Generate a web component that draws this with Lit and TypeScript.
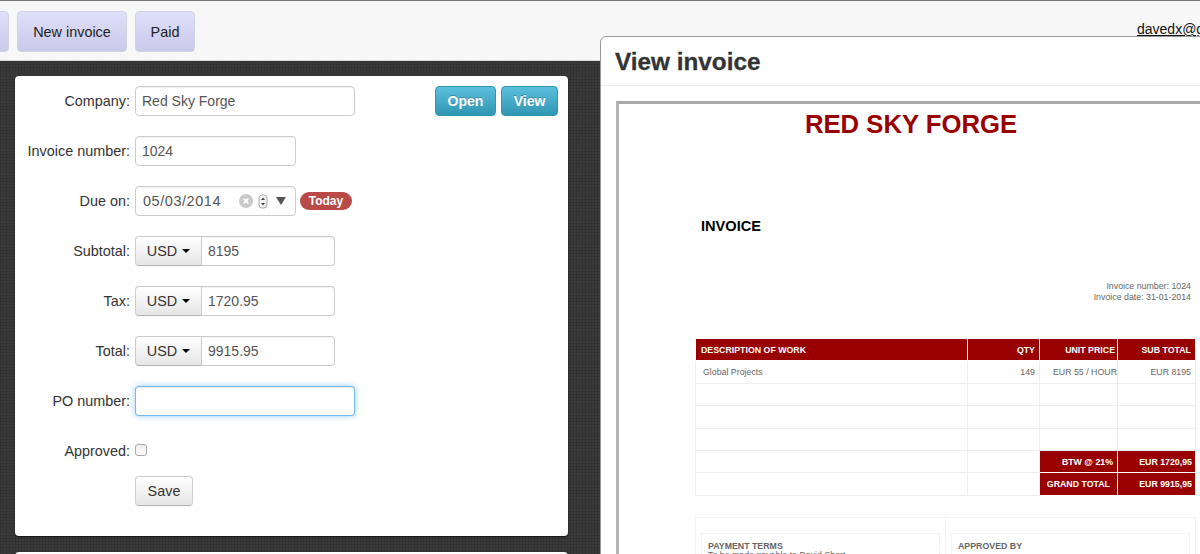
import { LitElement, html, css } from 'lit'
import { customElement } from 'lit/decorators.js'

// Invoice document shown inside the "View invoice" dialog
@customElement('invoice-doc')
export class InvoiceDoc extends LitElement {
  static styles = css`
    :host {
      display: block;
      width: 582px;
      margin-left: 1px;
      font-family: 'Liberation Sans', Arial, sans-serif;
      color: #666;
      font-size: 8.8px;
    }
    h1 {
      margin: 0;
      padding-top: 4px;
      text-align: center;
      color: #990000;
      font-size: 25.7px;
      line-height: 30px;
      font-weight: bold;
      height: 30px;
    }
    h2 {
      margin: 78px 0 0 81px;
      font-size: 14.6px;
      line-height: 18px;
      color: #000;
    }
    .meta {
      margin: 46px 11px 0 0;
      text-align: right;
      line-height: 10.500px;
    }
    table {
      margin: 36px 0 0 75px;
      width: 501px;
      border-collapse: collapse;
      table-layout: fixed;
    }
    td, th {
      border: 1px solid #eee;
      height: 22.4px;
      padding: 0 4px;
      text-align: right;
      box-sizing: border-box;
      white-space: nowrap;
      overflow: visible;
    }
    .wd { width: 272px; text-align: left; padding-left: 7px; }
    th {
      background: #990000;
      color: #fff;
      border-color: #fff;
      font-size: 8.8px;
    }
    th.wd { padding-left: 5px; }
    th.price { padding-right: 2px; }
    td.red {
      background: #990000;
      color: #fff;
      font-weight: bold;
      border-color: #fff;
    }
    td.tot { padding-right: 3px; }
    td.grand { padding-right: 7px; }
    td.flush { padding-right: 0; }
    .terms {
      margin: 21px 0 0 75px;
      width: 501px;
      border: 1px solid #f3f3f3;
      display: grid;
      grid-template-columns: 249px 1fr;
      height: 60px;
      box-sizing: border-box;
    }
    .cell { padding: 15px 5px 0; }
    .cell + .cell { border-left: 1px solid #f3f3f3; }
    .box {
      border: 1px solid #f3f3f3;
      padding: 8px 6px;
      height: 40px;
      line-height: 9px;
      color: #666;
    }
    .box b { display: block; }
  `

  render() {
    return html`
      <h1>RED SKY FORGE</h1>
      <h2>INVOICE</h2>
      <div class="meta">Invoice number: 1024<br />Invoice date: 31-01-2014</div>
      <table>
        <tr>
          <th class="wd">DESCRIPTION OF WORK</th>
          <th style="width:72px">QTY</th>
          <th class="price" style="width:78px">UNIT PRICE</th>
          <th>SUB TOTAL</th>
        </tr>
        <tr>
          <td class="wd">Global Projects</td>
          <td>149</td>
          <td class="flush">EUR 55 / HOUR</td>
          <td>EUR 8195</td>
        </tr>
        <tr><td class="wd"></td><td></td><td></td><td></td></tr>
        <tr><td class="wd"></td><td></td><td></td><td></td></tr>
        <tr><td class="wd"></td><td></td><td></td><td></td></tr>
        <tr>
          <td class="wd"></td><td></td>
          <td class="red">BTW @ 21%</td>
          <td class="red tot">EUR 1720,95</td>
        </tr>
        <tr>
          <td class="wd"></td><td></td>
          <td class="red grand">GRAND TOTAL</td>
          <td class="red tot">EUR 9915,95</td>
        </tr>
      </table>
      <div class="terms">
        <div class="cell">
          <div class="box"><b>PAYMENT TERMS</b>To be made payable to David Short</div>
        </div>
        <div class="cell">
          <div class="box"><b>APPROVED BY</b></div>
        </div>
      </div>
    `
  }
}

@customElement('app-root')
export class AppRoot extends LitElement {
  static styles = css`
    :host {
      display: block;
      position: relative;
      width: 1200px;
      height: 554px;
      overflow: hidden;
      font-family: 'Liberation Sans', Arial, sans-serif;
      font-size: 14.4px;
      color: #333;
      background-color: #3a3a3a;
      background-image:
        repeating-linear-gradient(0deg, rgba(0, 0, 0, 0.1) 0 1px, transparent 1px 3px),
        repeating-linear-gradient(90deg, rgba(0, 0, 0, 0.1) 0 1px, transparent 1px 3px);
    }

    .navbar {
      height: 61px;
      box-sizing: border-box;
      border-top: 1px solid #777;
      background: #f7f7f7;
      border-bottom: 1px solid #ddd;
      display: flex;
      align-items: flex-start;
      padding: 10px 0 0 0;
      gap: 8px;
      position: relative;
      white-space: nowrap;
    }
    .nav-btn {
      height: 41px;
      box-sizing: border-box;
      border: 1px solid #d2d2e6;
      border-radius: 4px;
      background: linear-gradient(#e0e0fb, #c9c9e8);
      display: flex;
      align-items: center;
      justify-content: center;
      color: #222;
    }
    .nav-btn.cut { width: 30px; margin-left: -21px; }
    .nav-btn.new { width: 110px; }
    .nav-btn.paid { width: 60px; }
    .user {
      position: absolute;
      left: 1137px;
      top: 20px;
      color: #111;
      font-size: 14px;
      text-decoration: underline;
      line-height: 16px;
    }

    .card {
      margin: 15px 0 0 15px;
      width: 553px;
      height: 460px;
      box-sizing: border-box;
      background: #fff;
      border-radius: 4px;
      box-shadow: 0 1px 2px rgba(0, 0, 0, 0.7);
      padding: 10px 10px 0 0;
      position: relative;
      display: flex;
      flex-direction: column;
    }
    .card.next { margin-top: 16px; }

    .row {
      display: grid;
      grid-template-columns: 115px 1fr;
      column-gap: 5px;
      height: 50px;
      align-items: start;
    }
    label {
      text-align: right;
      line-height: 30px;
      height: 30px;
      white-space: nowrap;
    }
    .field {
      height: 30px;
      box-sizing: border-box;
      border: 1px solid #ccc;
      border-radius: 4px;
      background: #fff;
      color: #555;
      font: inherit;
      font-size: 14px;
      padding: 0 6px;
      outline: none;
      box-shadow: inset 0 1px 1px rgba(0, 0, 0, 0.06);
      display: block;
      width: 161px;
    }
    .field.wide { width: 220px; }
    .field.focus {
      border-color: rgba(82, 168, 236, 0.8);
      box-shadow: inset 0 1px 1px rgba(0, 0, 0, 0.075), 0 0 6px rgba(82, 168, 236, 0.6);
    }

    .actions {
      position: absolute;
      top: 10px;
      right: 10px;
      display: flex;
      gap: 5px;
    }
    .info {
      height: 30px;
      box-sizing: border-box;
      border: 1px solid #2f96b4;
      border-radius: 4px;
      background: linear-gradient(#5bc0de, #2f96b4);
      color: #fff;
      font-weight: bold;
      font-size: 14px;
      display: flex;
      align-items: center;
      justify-content: center;
      text-shadow: 0 -1px 0 rgba(0, 0, 0, 0.25);
    }
    .info.open { width: 61px; }
    .info.view { width: 57px; }

    .date-wrap { display: flex; align-items: center; gap: 4px; }
    .date {
      display: flex;
      align-items: center;
      padding: 0 0 0 7px;
      font-size: 14.5px;
      letter-spacing: 0.55px;
    }
    .date .val { width: 96px; }
    .date svg { display: block; flex: none; }
    .badge {
      background: #b94a48;
      color: #fff;
      font-weight: bold;
      font-size: 12px;
      height: 18px;
      line-height: 18px;
      width: 52px;
      text-align: center;
      border-radius: 9px;
    }

    .group { display: flex; width: 200px; height: 30px; }
    .addon {
      width: 67px;
      box-sizing: border-box;
      border: 1px solid #ccc;
      border-bottom-color: #b3b3b3;
      border-radius: 4px 0 0 4px;
      background: linear-gradient(#fff, #e6e6e6);
      display: flex;
      align-items: center;
      justify-content: center;
      gap: 5px;
      color: #333;
    }
    .caret {
      width: 0;
      height: 0;
      border-left: 4px solid transparent;
      border-right: 4px solid transparent;
      border-top: 4px solid #000;
    }
    .group .field {
      flex: 1;
      width: auto;
      min-width: 0;
      border-left: none;
      border-radius: 0 4px 4px 0;
    }

    .check {
      appearance: none;
      display: block;
      margin: 8px 0 0;
      width: 12px;
      height: 12px;
      border: 1px solid #aaa;
      border-radius: 3px;
      background: linear-gradient(#eee, #fff);
    }
    .save-row { height: 30px; padding-left: 120px; margin-top: -10px; }
    .save {
      width: 58px;
      height: 30px;
      box-sizing: border-box;
      border: 1px solid #ccc;
      border-bottom-color: #b3b3b3;
      border-radius: 4px;
      background: linear-gradient(#fff, #e6e6e6);
      display: flex;
      align-items: center;
      justify-content: center;
    }

    .modal {
      position: absolute;
      left: 600px;
      top: 36px;
      width: 640px;
      height: 560px;
      background: #fff;
      border: 1px solid #999;
      border-radius: 6px;
      box-sizing: border-box;
      overflow: hidden;
    }
    .modal-head {
      height: 49px;
      box-sizing: border-box;
      border-bottom: 1px solid #eee;
      padding-left: 14px;
      font-size: 24.3px;
      font-weight: bold;
      line-height: 50px;
      color: #333;
      -webkit-text-stroke: 0.3px #333;
    }
    .frame {
      margin: 15px 0 0 15px;
      border-style: solid;
      border-width: 3px 0 0 3px;
      border-color: #aaa #000 #000 #b4b4b4;
      padding-top: 1px;
      height: 480px;
    }
  `

  private currency(value: string) {
    return html`
      <div class="group">
        <div class="addon">USD <span class="caret"></span></div>
        <input class="field" .value=${value} />
      </div>
    `
  }

  render() {
    return html`
      <div class="navbar">
        <div class="nav-btn cut"></div>
        <div class="nav-btn new">New invoice</div>
        <div class="nav-btn paid">Paid</div>
        <a class="user">davedx@gmail.com</a>
      </div>

      <div class="card">
        <div class="actions">
          <div class="info open">Open</div>
          <div class="info view">View</div>
        </div>
        <div class="row">
          <label>Company:</label>
          <input class="field wide" value="Red Sky Forge" />
        </div>
        <div class="row">
          <label>Invoice number:</label>
          <input class="field" value="1024" />
        </div>
        <div class="row">
          <label>Due on:</label>
          <div class="date-wrap">
            <div class="field date">
              <span class="val">05/03/2014</span>
              <svg width="14" height="14" viewBox="0 0 15 15">
                <circle cx="7.500" cy="7.500" r="7.500" fill="#c8c8c8" />
                <path d="M5 5l5 5M10 5l-5 5" stroke="#fff" stroke-width="2" />
              </svg>
              <svg width="10" height="15" viewBox="0 0 10 15" style="margin-left:5px">
                <rect x="1" y="1" width="8" height="13" rx="3" fill="#f4f4f4" stroke="#aaa" />
                <path d="M5 3.500l2 2.500H3zM5 11.500l2-2.500H3z" fill="#444" />
              </svg>
              <svg width="10" height="8" viewBox="0 0 10 8" style="margin-left:8px">
                <path d="M0 0h10l-5 8z" fill="#555" />
              </svg>
            </div>
            <span class="badge">Today</span>
          </div>
        </div>
        <div class="row"><label>Subtotal:</label>${this.currency('8195')}</div>
        <div class="row"><label>Tax:</label>${this.currency('1720.95')}</div>
        <div class="row"><label>Total:</label>${this.currency('9915.95')}</div>
        <div class="row">
          <label>PO number:</label>
          <input class="field wide focus" />
        </div>
        <div class="row">
          <label>Approved:</label>
          <input class="check" type="checkbox" />
        </div>
        <div class="save-row"><div class="save">Save</div></div>
      </div>
      <div class="card next"></div>

      <div class="modal">
        <div class="modal-head">View invoice</div>
        <div class="frame"><invoice-doc></invoice-doc></div>
      </div>
    `
  }
}
